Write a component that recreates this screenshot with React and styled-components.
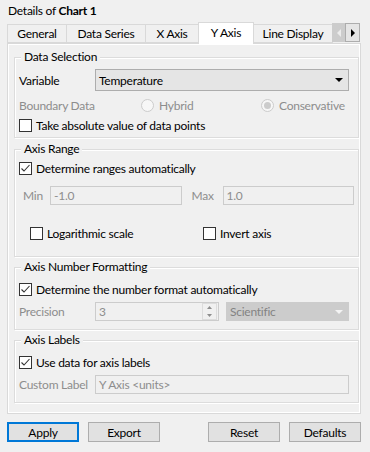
import React from "react";
import styled, { createGlobalStyle } from "styled-components";

const GlobalStyle = createGlobalStyle`
  html, body {
    margin: 0;
    padding: 0;
    background: #f0f0f0;
  }
  body {
    font-family: Lato, "Noto Sans", sans-serif;
    font-size: 12px;
    letter-spacing: -0.25px;
    color: #000;
  }
`;

const Window = styled.div`
  width: 370px;
  height: 452px;
  box-sizing: border-box;
  padding: 0 9px 0 7px;
  display: flex;
  flex-direction: column;
  background: #f0f0f0;
  overflow: hidden;
`;

const Title = styled.div`
  height: 22px;
  line-height: 22px;
  padding-left: 1px;
  white-space: nowrap;

  b {
    font-weight: 700;
  }
`;

const TabBar = styled.div`
  height: 21px;
  display: flex;
  align-items: flex-end;
  position: relative;
  z-index: 1;
`;

const Tab = styled.div`
  box-sizing: border-box;
  width: ${(p) => p.$w}px;
  height: ${(p) => (p.$active ? 22 : 19)}px;
  margin-bottom: ${(p) => (p.$active ? -1 : 0)}px;
  margin-right: -1px;
  border: 1px solid #d9d9d9;
  border-bottom: ${(p) => (p.$active ? "none" : "1px solid #d9d9d9")};
  background: ${(p) => (p.$active ? "#ffffff" : "#f0f0f0")};
  display: flex;
  align-items: center;
  justify-content: center;
  padding-bottom: ${(p) => (p.$active ? 3 : 0)}px;
  white-space: nowrap;
  position: relative;
  z-index: ${(p) => (p.$active ? 2 : 1)};
`;

const ScrollBtn = styled.div`
  box-sizing: border-box;
  width: ${(p) => p.$w}px;
  height: 19px;
  margin-bottom: 1px;
  display: flex;
  align-items: center;
  justify-content: center;
  background: ${(p) => (p.$disabled ? "#cccccc" : "#e5e5e5")};
  border: 1px solid ${(p) => (p.$disabled ? "#cccccc" : "#adadad")};
  position: relative;
  z-index: 3;
`;

const Panel = styled.div`
  box-sizing: border-box;
  height: 371px;
  border: 1px solid #d9d9d9;
  box-shadow: inset 1px 1px 0 #ffffff, inset -1px -1px 0 #ffffff;
  padding: 13px 1px 0 6px;
  display: flex;
  flex-direction: column;
`;

const Group = styled.div`
  margin-top: ${(p) => p.$mt || 0}px;
  border: 1px solid #dcdcdc;
  box-shadow: inset 1px 1px 0 #ffffff, 1px 1px 0 #ffffff;
  padding: 0 4px ${(p) => p.$pb}px 4px;
  display: flex;
  flex-direction: column;
`;

const Legend = styled.div`
  align-self: flex-start;
  margin: -8px 0 0 2px;
  padding: 0 3px;
  line-height: 14px;
  background: #f0f0f0;
  white-space: nowrap;
`;

const Row = styled.div`
  display: flex;
  align-items: center;
  height: ${(p) => p.$h || 18}px;
  margin-top: ${(p) => p.$mt || 0}px;
  padding-left: ${(p) => p.$pl || 0}px;
  white-space: nowrap;
`;

const Label = styled.div`
  width: ${(p) => p.$w}px;
  flex: none;
  margin-left: ${(p) => p.$ml || 0}px;
  color: ${(p) => (p.$disabled ? "#8d8d8d" : "#000")};
`;

const Combo = styled.div`
  box-sizing: border-box;
  width: ${(p) => p.$w}px;
  height: ${(p) => p.$h}px;
  margin-left: ${(p) => p.$ml || 0}px;
  border: 1px solid ${(p) => (p.$disabled ? "#cccccc" : "#adadad")};
  background: ${(p) => (p.$disabled ? "#cccccc" : "#e5e5e5")};
  color: ${(p) => (p.$disabled ? "#838383" : "#000")};
  display: flex;
  align-items: center;
  justify-content: space-between;
  padding: 0 5px 0 3px;
`;

const Input = styled.div`
  box-sizing: border-box;
  width: ${(p) => p.$w}px;
  height: 19px;
  border: 1px solid #cccccc;
  background: #f0f0f0;
  color: #8d8d8d;
  display: flex;
  align-items: center;
  justify-content: space-between;
  padding: 0 1px 0 3px;
`;

const Spinner = styled.div`
  width: 13px;
  height: 15px;
  border: 1px solid #dcdcdc;
  display: flex;
  flex-direction: column;
  align-items: center;
  justify-content: space-around;
`;

const Box = styled.div`
  box-sizing: border-box;
  width: 13px;
  height: 13px;
  flex: none;
  border: 1px solid #333333;
  background: #ffffff;
  margin-right: 4px;
  display: flex;
  align-items: center;
  justify-content: center;
`;

const CheckItem = styled.div`
  display: flex;
  align-items: center;
  width: ${(p) => (p.$w ? `${p.$w}px` : "auto")};
`;

const RadioItem = styled.div`
  display: flex;
  align-items: center;
  width: ${(p) => (p.$w ? `${p.$w}px` : "auto")};
  color: #8d8d8d;
`;

const Circle = styled.div`
  box-sizing: border-box;
  width: 13px;
  height: 13px;
  border-radius: 50%;
  border: 1px solid #cccccc;
  background: #f7f7f7;
  margin-right: 5px;
  display: flex;
  align-items: center;
  justify-content: center;

  &::after {
    content: "";
    display: ${(p) => (p.$on ? "block" : "none")};
    width: 7px;
    height: 7px;
    border-radius: 50%;
    background: #cccccc;
  }
`;

const Buttons = styled.div`
  margin-top: 8px;
  display: flex;
  justify-content: space-between;
`;

const ButtonGroup = styled.div`
  display: flex;
  gap: 9px;
`;

const Button = styled.div`
  box-sizing: border-box;
  width: 72px;
  height: 20px;
  border: ${(p) => (p.$default ? "2px solid #0078d7" : "1px solid #adadad")};
  background: #e1e1e1;
  display: flex;
  align-items: center;
  justify-content: center;
`;

function Arrow({ color = "#000", dir = "down" }) {
  const pts = {
    down: "0,0 8,0 4,4",
    left: "4,0 4,8 0,4",
    right: "0,0 0,8 4,4",
  }[dir];
  const w = dir === "down" ? 8 : 4;
  const h = dir === "down" ? 4 : 8;
  return (
    <svg width={w} height={h} viewBox={`0 0 ${w} ${h}`}>
      <polygon points={pts} fill={color} />
    </svg>
  );
}

function Tiny({ dir }) {
  return (
    <svg width="5" height="3" viewBox="0 0 5 3">
      <polygon
        points={dir === "up" ? "0,3 5,3 2.5,0" : "0,0 5,0 2.5,3"}
        fill="#8d8d8d"
      />
    </svg>
  );
}

function Check({ checked, label }) {
  return (
    <>
      <Box>
        {checked && (
          <svg width="11" height="11" viewBox="0 0 11 11">
            <polyline
              points="1.5,5.5 4,8 9.5,2"
              fill="none"
              stroke="#333"
              strokeWidth="1.1"
            />
          </svg>
        )}
      </Box>
      {label}
    </>
  );
}

const tabs = [
  { name: "General", w: 60 },
  { name: "Data Series", w: 80 },
  { name: "X Axis", w: 54 },
  { name: "Y Axis", w: 56, active: true },
  { name: "Line Display", w: 80 },
];

export default function App() {
  return (
    <Window>
      <GlobalStyle />
      <Title>
        Details of <b>Chart 1</b>
      </Title>

      <TabBar>
        {tabs.map((t) => (
          <Tab key={t.name} $w={t.w} $active={t.active}>
            {t.name}
          </Tab>
        ))}
        <ScrollBtn $w={13} $disabled>
          <Arrow dir="left" color="#ececec" />
        </ScrollBtn>
        <ScrollBtn $w={15}>
          <Arrow dir="right" />
        </ScrollBtn>
      </TabBar>

      <Panel>
        <Group $pb={3}>
          <Legend>Data Selection</Legend>
          <Row $h={22} $mt={5}>
            <Label $w={76}>Variable</Label>
            <Combo $w={254} $h={22}>
              Temperature
              <Arrow />
            </Combo>
          </Row>
          <Row $mt={5}>
            <Label $w={122} $disabled>
              Boundary Data
            </Label>
            <RadioItem $w={120}>
              <Circle />
              Hybrid
            </RadioItem>
            <RadioItem>
              <Circle $on />
              Conservative
            </RadioItem>
          </Row>
          <Row $mt={2}>
            <Check label="Take absolute value of data points" />
          </Row>
        </Group>

        <Group $mt={11} $pb={14}>
          <Legend>Axis Range</Legend>
          <Row $mt={3}>
            <Check checked label="Determine ranges automatically" />
          </Row>
          <Row $h={19} $mt={9} $pl={4}>
            <Label $w={27} $disabled>
              Min
            </Label>
            <Input $w={132}>-1.0</Input>
            <Label $w={31} $ml={10} $disabled>
              Max
            </Label>
            <Input $w={132}>1.0</Input>
          </Row>
          <Row $mt={19} $pl={11}>
            <CheckItem $w={173}>
              <Check label="Logarithmic scale" />
            </CheckItem>
            <CheckItem>
              <Check label="Invert axis" />
            </CheckItem>
          </Row>
        </Group>

        <Group $mt={10} $pb={8}>
          <Legend>Axis Number Formatting</Legend>
          <Row $mt={6}>
            <Check checked label="Determine the number format automatically" />
          </Row>
          <Row $h={19} $mt={4}>
            <Label $w={76} $disabled>
              Precision
            </Label>
            <Input $w={124}>
              3
              <Spinner>
                <Tiny dir="up" />
                <Tiny dir="down" />
              </Spinner>
            </Input>
            <Combo $w={123} $h={19} $ml={7} $disabled>
              Scientific
              <Arrow color="#f4f4f4" />
            </Combo>
          </Row>
        </Group>

        <Group $mt={10} $pb={8}>
          <Legend>Axis Labels</Legend>
          <Row $mt={6}>
            <Check checked label="Use data for axis labels" />
          </Row>
          <Row $h={19} $mt={4}>
            <Label $w={76} $disabled>
              Custom Label
            </Label>
            <Input $w={254}>Y Axis &lt;units&gt;</Input>
          </Row>
        </Group>
      </Panel>

      <Buttons>
        <ButtonGroup>
          <Button $default>Apply</Button>
          <Button>Export</Button>
        </ButtonGroup>
        <ButtonGroup>
          <Button>Reset</Button>
          <Button>Defaults</Button>
        </ButtonGroup>
      </Buttons>
    </Window>
  );
}
